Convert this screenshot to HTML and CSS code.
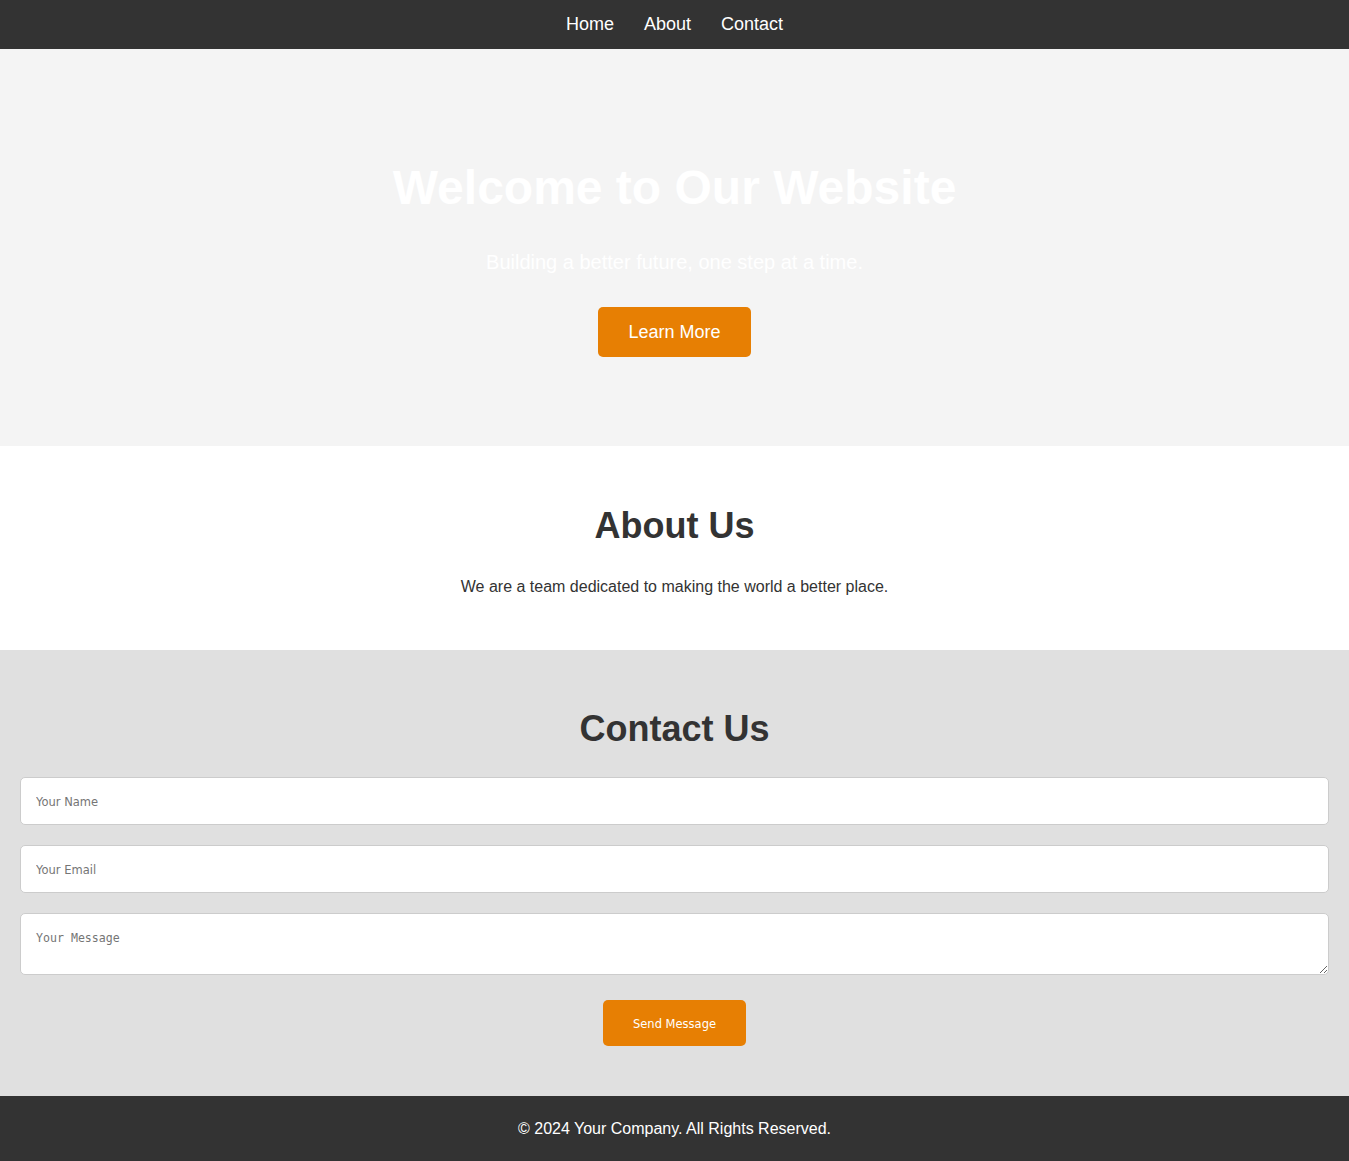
FILE: index.html
```html
<!DOCTYPE html>
<html lang="en">
<head>
<meta charset="utf-8">
<title>Welcome to Our Website</title>
<link rel="stylesheet" href="styles.css">
</head>
<body>
<nav class="topnav">
  <a href="#home" class="nav-link">Home</a>
  <a href="#about" class="nav-link">About</a>
  <a href="#contact" class="nav-link">Contact</a>
</nav>
<header class="hero" id="home">
  <h1 class="hero-title">Welcome to Our Website</h1>
  <p class="hero-sub">Building a better future, one step at a time.</p>
  <a href="#about" class="hero-btn">Learn More</a>
</header>
<section class="about" id="about">
  <h2 class="section-title">About Us</h2>
  <p class="about-text">We are a team dedicated to making the world a better place.</p>
</section>
<section class="contact" id="contact">
  <h2 class="section-title">Contact Us</h2>
  <form class="contact-form">
    <input class="field" type="text" placeholder="Your Name">
    <input class="field" type="email" placeholder="Your Email">
    <textarea class="field field-area" placeholder="Your Message"></textarea>
    <button class="send-btn" type="button">Send Message</button>
  </form>
</section>
<footer class="footer">
  <p class="footer-text">&copy; 2024 Your Company. All Rights Reserved.</p>
</footer>
</body>
</html>
```
FILE: styles.css
```css
* { box-sizing: border-box; }
html, body { margin: 0; padding: 0; }
body {
  font-family: "Liberation Sans", Arial, sans-serif;
  color: #333;
  background: #fff;
}
.topnav {
  background: #333;
  height: 49px;
  display: flex;
  justify-content: center;
  align-items: center;
  gap: 30px;
}
.nav-link {
  color: #fff;
  text-decoration: none;
  font-size: 18px;
  line-height: 21px;
}
.hero {
  background: #f4f4f4;
  height: 397px;
  padding: 111px 20px 0;
  display: flex;
  flex-direction: column;
  align-items: center;
  text-align: center;
}
.hero-title {
  margin: 0;
  color: #fff;
  font-size: 48px;
  line-height: 55px;
  font-weight: bold;
}
.hero-sub {
  margin: 36px 0 0;
  color: #fff;
  font-size: 20px;
  line-height: 23px;
}
.hero-btn {
  margin-top: 33px;
  display: inline-block;
  background: #e77f03;
  color: #fff;
  text-decoration: none;
  font-size: 18px;
  line-height: 20px;
  padding: 15px 30px;
  border-radius: 5px;
}
.about {
  background: #fff;
  height: 204px;
  padding: 59px 20px 0;
  text-align: center;
}
.section-title {
  margin: 0;
  font-size: 36px;
  line-height: 41px;
  font-weight: bold;
  color: #333;
}
.about-text {
  margin: 32px 0 0;
  font-size: 16px;
  line-height: 18px;
}
.contact {
  background: #e0e0e0;
  height: 446px;
  padding: 58px 20px 0;
  text-align: center;
}
.contact-form {
  margin-top: 28px;
  display: flex;
  flex-direction: column;
  align-items: center;
  gap: 20px;
}
.field {
  display: block;
  width: 100%;
  margin: 0;
  padding: 16px 15px 14px;
  border: 1px solid #ccc;
  border-radius: 5px;
  background: #fff;
  font-family: "DejaVu Sans", sans-serif;
  font-size: 11.5px;
  line-height: 16px;
  height: 48px;
  color: #333;
}
.field::placeholder { color: #757575; }
.field-area {
  font-family: "DejaVu Sans Mono", monospace;
  font-size: 11.6px;
  line-height: 16px;
  padding-top: 16px;
  height: 62px;
  resize: vertical;
}
.send-btn {
  margin-top: 5px;
  background: #e77f03;
  color: #fff;
  border: none;
  border-radius: 5px;
  font-family: "DejaVu Sans", sans-serif;
  font-size: 11.5px;
  line-height: 16px;
  padding: 16px 30px 14px;
  height: 46px;
  cursor: pointer;
}
.footer {
  background: #333;
  height: 65px;
  display: flex;
  align-items: center;
  justify-content: center;
}
.footer-text {
  margin: 0;
  color: #fff;
  font-size: 16px;
  line-height: 18px;
}
```
